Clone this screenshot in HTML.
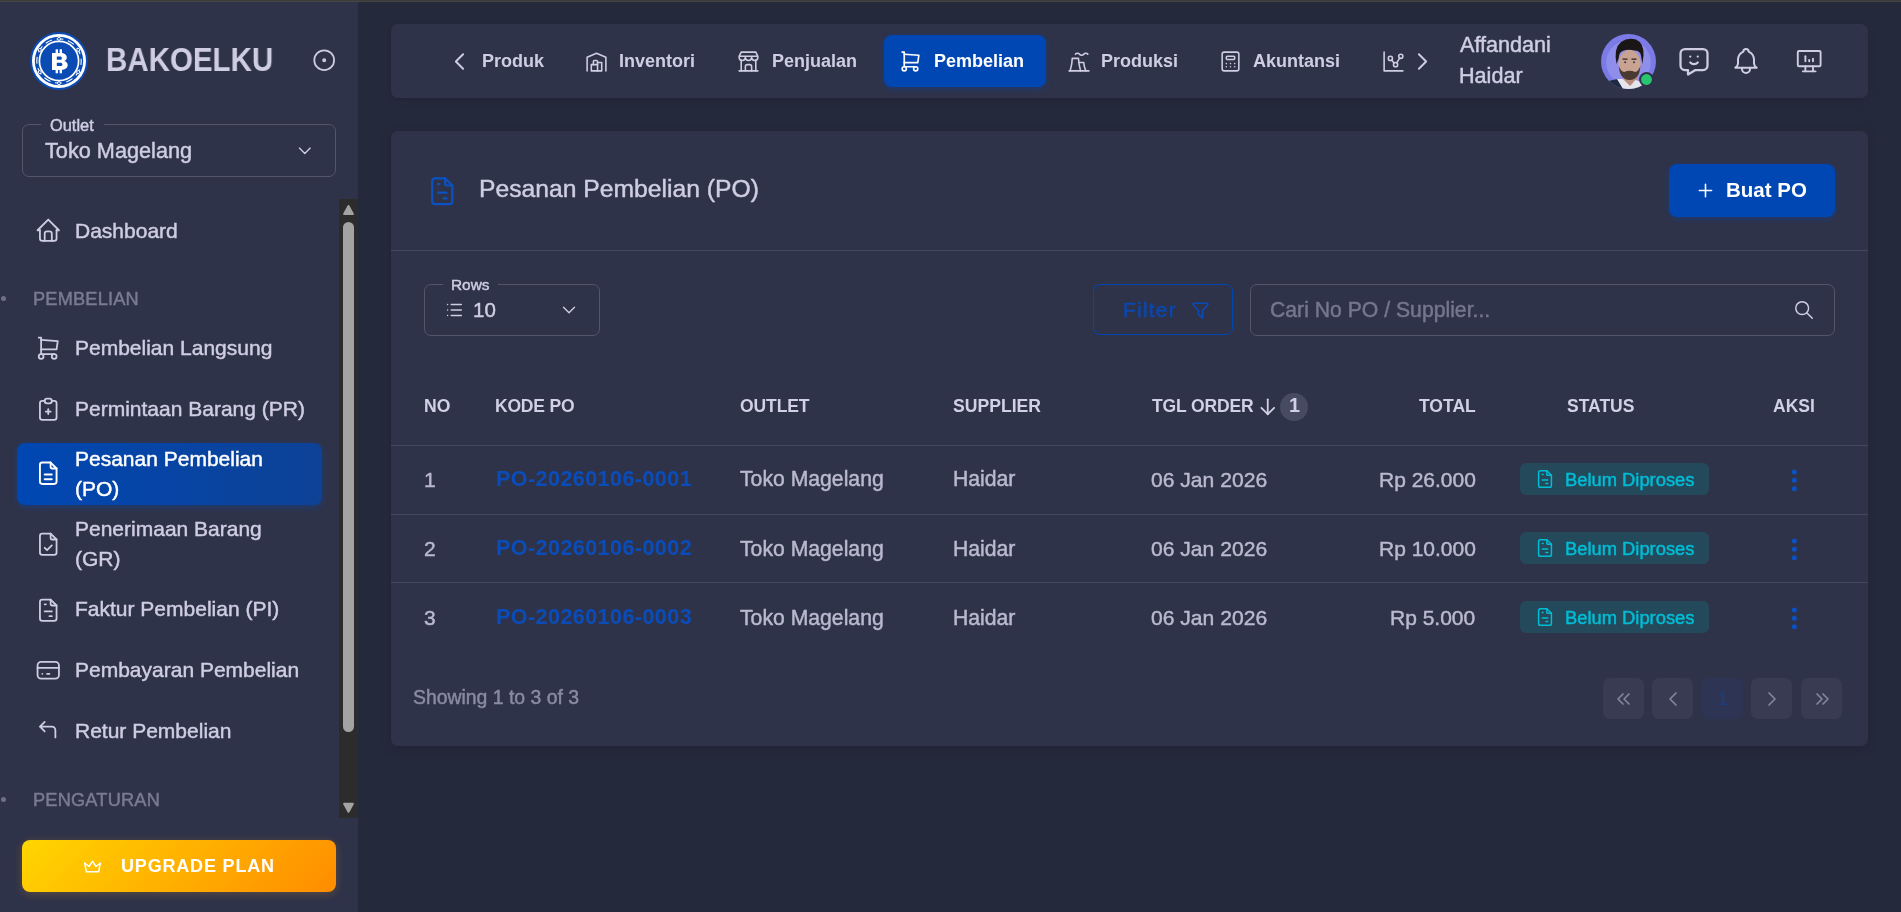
<!DOCTYPE html>
<html><head><meta charset="utf-8"><title>Pesanan Pembelian</title>
<style>
html,body{margin:0;padding:0;}
body{width:1901px;height:912px;overflow:hidden;background:#25293c;font-family:"Liberation Sans",sans-serif;position:relative;}
.t{position:absolute;white-space:nowrap;will-change:transform;}
.i{position:absolute;overflow:visible;}
.box{position:absolute;box-sizing:border-box;}
</style></head><body>
<div class="box" style="left:0;top:0;width:1901px;height:1px;background:#3c3c3c"></div><div class="box" style="left:0;top:1px;width:1901px;height:1px;background:#454644"></div>
<div class="box" style="left:0;top:2px;width:358px;height:910px;background:#2f3349"></div>
<svg class="i" style="left:29.5px;top:31.5px;width:58px;height:58px" viewBox="0 0 58 58">
<circle cx="29" cy="29" r="29" fill="#0b4cb4"/>
<circle cx="29" cy="29" r="25.6" fill="none" stroke="#fff" stroke-width="2.8"/>
<circle cx="29" cy="29" r="22.2" fill="none" stroke="#fff" stroke-width="1.1" stroke-dasharray="7 4.6" stroke-dashoffset="3"/>
<circle cx="29" cy="29" r="19.6" fill="none" stroke="#fff" stroke-width="1.7"/>
<circle cx="29" cy="6.8" r="1.5" fill="#0b4cb4" stroke="#fff" stroke-width="1"/>
<circle cx="29" cy="51.2" r="1.5" fill="#0b4cb4" stroke="#fff" stroke-width="1"/>
<circle cx="9.8" cy="17.9" r="1.5" fill="#0b4cb4" stroke="#fff" stroke-width="1"/>
<circle cx="48.2" cy="17.9" r="1.5" fill="#0b4cb4" stroke="#fff" stroke-width="1"/>
<circle cx="9.8" cy="40.1" r="1.5" fill="#0b4cb4" stroke="#fff" stroke-width="1"/>
<circle cx="48.2" cy="40.1" r="1.5" fill="#0b4cb4" stroke="#fff" stroke-width="1"/>
<path d="M22 21h8.6c4 0 6.2 1.9 6.2 4.4c0 1.8-1.1 3-2.6 3.5c2.2 .5 3.5 2 3.5 4.2c0 2.9-2.4 4.9-6.6 4.9h-9.1z M26.8 24.6v3.1h3.3c1.1 0 1.8-.6 1.8-1.55s-.7-1.55-1.8-1.55z M26.8 30.8v3.3h3.6c1.2 0 2-.6 2-1.65s-.8-1.65-2-1.65z" fill="#fff" fill-rule="evenodd"/>
<rect x="25.6" y="17.3" width="2.4" height="4.2" fill="#fff"/><rect x="29.6" y="17.3" width="2.4" height="4.2" fill="#fff"/>
<rect x="25.6" y="37.4" width="2.4" height="3.9" fill="#fff"/><rect x="29.6" y="37.4" width="2.4" height="3.9" fill="#fff"/>
</svg>
<div class="t " style="left:106.2px;top:44.39px;font-size:32.5px;line-height:32.5px;color:#cfcde4;font-weight:700;transform:scaleX(.908);transform-origin:0 0;">BAKOELKU</div>
<svg class="i" style="left:311.4px;top:47.1px;width:26.4px;height:26.4px;" viewBox="0 0 24 24" fill="none" stroke="#cfcde4" stroke-width="1.6" stroke-linecap="round" stroke-linejoin="round"><path d="M12 12m-1 0a1 1 0 1 0 2 0a1 1 0 1 0 -2 0"/><path d="M12 12m-9 0a9 9 0 1 0 18 0a9 9 0 1 0 -18 0"/></svg>
<div class="box" style="left:22px;top:124px;width:314px;height:53px;border:1px solid #545569;border-radius:7px"></div>
<div class="box" style="left:41px;top:120px;width:63px;height:8px;background:#2f3349"></div>
<div class="t " style="left:49.7px;top:116.62px;font-size:16.4px;line-height:16.4px;color:#cfcde4;-webkit-text-stroke-width:0.45px;">Outlet</div>
<div class="t " style="left:44.5px;top:139.93px;font-size:21.7px;line-height:21.7px;color:#cfcde4;-webkit-text-stroke-width:0.45px;">Toko Magelang</div>
<svg class="i" style="left:294.2px;top:140.2px;width:21.6px;height:21.6px;" viewBox="0 0 24 24" fill="none" stroke="#cfcde4" stroke-width="1.5" stroke-linecap="round" stroke-linejoin="round"><path d="M6 9l6 6l6 -6"/></svg>
<svg class="i" style="left:33.75px;top:215.95px;width:28.5px;height:28.5px;" viewBox="0 0 24 24" fill="none" stroke="#cfcde4" stroke-width="1.5" stroke-linecap="round" stroke-linejoin="round"><path d="M5 12l-2 0l9 -9l9 9l-2 0"/><path d="M5 12v7a2 2 0 0 0 2 2h10a2 2 0 0 0 2 -2v-7"/><path d="M9 21v-6a2 2 0 0 1 2 -2h2a2 2 0 0 1 2 2v6"/></svg>
<div class="t " style="left:75.2px;top:219.62px;font-size:21px;line-height:21px;color:#cfcde4;-webkit-text-stroke-width:0.45px;">Dashboard</div>
<svg class="i" style="left:33.75px;top:333.65px;width:28.5px;height:28.5px;" viewBox="0 0 24 24" fill="none" stroke="#cfcde4" stroke-width="1.5" stroke-linecap="round" stroke-linejoin="round"><path d="M6 19m-2 0a2 2 0 1 0 4 0a2 2 0 1 0 -4 0"/><path d="M17 19m-2 0a2 2 0 1 0 4 0a2 2 0 1 0 -4 0"/><path d="M17 17h-11v-14h-2"/><path d="M6 5l14 1l-1 7h-13"/></svg>
<div class="t " style="left:75.2px;top:337.22px;font-size:21px;line-height:21px;color:#cfcde4;-webkit-text-stroke-width:0.45px;">Pembelian Langsung</div>
<svg class="i" style="left:33.75px;top:394.75px;width:28.5px;height:28.5px;" viewBox="0 0 24 24" fill="none" stroke="#cfcde4" stroke-width="1.5" stroke-linecap="round" stroke-linejoin="round"><path d="M9 5h-2a2 2 0 0 0 -2 2v12a2 2 0 0 0 2 2h10a2 2 0 0 0 2 -2v-12a2 2 0 0 0 -2 -2h-2"/><path d="M9 3m0 2a2 2 0 0 1 2 -2h2a2 2 0 0 1 2 2v0a2 2 0 0 1 -2 2h-2a2 2 0 0 1 -2 -2z"/><path d="M10 14h4"/><path d="M12 12v4"/></svg>
<div class="t " style="left:75.2px;top:398.42px;font-size:21px;line-height:21px;color:#cfcde4;-webkit-text-stroke-width:0.45px;">Permintaan Barang (PR)</div>
<svg class="i" style="left:33.75px;top:595.75px;width:28.5px;height:28.5px;" viewBox="0 0 24 24" fill="none" stroke="#cfcde4" stroke-width="1.5" stroke-linecap="round" stroke-linejoin="round"><path d="M14 3v4a1 1 0 0 0 1 1h4"/><path d="M17 21h-10a2 2 0 0 1 -2 -2v-14a2 2 0 0 1 2 -2h7l5 5v11a2 2 0 0 1 -2 2z"/><path d="M9 7l1 0"/><path d="M9 13l6 0"/><path d="M13 17l2 0"/></svg>
<div class="t " style="left:75.2px;top:598.22px;font-size:21px;line-height:21px;color:#cfcde4;-webkit-text-stroke-width:0.45px;">Faktur Pembelian (PI)</div>
<svg class="i" style="left:33.75px;top:655.75px;width:28.5px;height:28.5px;" viewBox="0 0 24 24" fill="none" stroke="#cfcde4" stroke-width="1.5" stroke-linecap="round" stroke-linejoin="round"><path d="M3 5m0 3a3 3 0 0 1 3 -3h12a3 3 0 0 1 3 3v8a3 3 0 0 1 -3 3h-12a3 3 0 0 1 -3 -3z"/><path d="M3 10l18 0"/><path d="M7 15l.01 0"/><path d="M11 15l2 0"/></svg>
<div class="t " style="left:75.2px;top:659.22px;font-size:21px;line-height:21px;color:#cfcde4;-webkit-text-stroke-width:0.45px;">Pembayaran Pembelian</div>
<svg class="i" style="left:33.75px;top:716.15px;width:28.5px;height:28.5px;" viewBox="0 0 24 24" fill="none" stroke="#cfcde4" stroke-width="1.5" stroke-linecap="round" stroke-linejoin="round"><path d="M18 18v-6a3 3 0 0 0 -3 -3h-10l4 -4m0 8l-4 -4"/></svg>
<div class="t " style="left:75.2px;top:719.82px;font-size:21px;line-height:21px;color:#cfcde4;-webkit-text-stroke-width:0.45px;">Retur Pembelian</div>
<div class="t " style="left:33.4px;top:289.79px;font-size:18.2px;line-height:18.2px;color:#7a7b92;-webkit-text-stroke-width:0.45px;letter-spacing:0.2px;">PEMBELIAN</div>
<div class="box" style="left:1px;top:296px;width:5px;height:5px;border-radius:50%;background:#6f7088"></div>
<div class="t " style="left:33px;top:790.89px;font-size:18.2px;line-height:18.2px;color:#7a7b92;-webkit-text-stroke-width:0.45px;letter-spacing:0.2px;">PENGATURAN</div>
<div class="box" style="left:1px;top:797px;width:5px;height:5px;border-radius:50%;background:#6f7088"></div>
<div class="box" style="left:17px;top:443px;width:305px;height:62px;border-radius:8px;background:linear-gradient(270deg,rgba(0,71,179,.72) 0%,#0047b3 100%);box-shadow:0 2px 6px rgba(0,71,179,.45)"></div>
<svg class="i" style="left:33.95px;top:459.45px;width:28.5px;height:28.5px;" viewBox="0 0 24 24" fill="none" stroke="#fff" stroke-width="1.6" stroke-linecap="round" stroke-linejoin="round"><path d="M14 3v4a1 1 0 0 0 1 1h4"/><path d="M17 21h-10a2 2 0 0 1 -2 -2v-14a2 2 0 0 1 2 -2h7l5 5v11a2 2 0 0 1 -2 2z"/><path d="M9 17h6"/><path d="M9 13h6"/></svg>
<div class="t " style="left:75.2px;top:447.52px;font-size:21px;line-height:21px;color:#fff;-webkit-text-stroke-width:0.45px;">Pesanan Pembelian</div>
<div class="t " style="left:75.2px;top:477.52px;font-size:21px;line-height:21px;color:#fff;-webkit-text-stroke-width:0.45px;">(PO)</div>
<svg class="i" style="left:33.95px;top:529.75px;width:28.5px;height:28.5px;" viewBox="0 0 24 24" fill="none" stroke="#cfcde4" stroke-width="1.5" stroke-linecap="round" stroke-linejoin="round"><path d="M14 3v4a1 1 0 0 0 1 1h4"/><path d="M17 21h-10a2 2 0 0 1 -2 -2v-14a2 2 0 0 1 2 -2h7l5 5v11a2 2 0 0 1 -2 2z"/><path d="M9 15l2 2l4 -4"/></svg>
<div class="t " style="left:75.2px;top:518.22px;font-size:21px;line-height:21px;color:#cfcde4;-webkit-text-stroke-width:0.45px;">Penerimaan Barang</div>
<div class="t " style="left:75.2px;top:548.22px;font-size:21px;line-height:21px;color:#cfcde4;-webkit-text-stroke-width:0.45px;">(GR)</div>
<div class="box" style="left:339px;top:199px;width:19px;height:619px;background:#2c2c2c"></div>
<div class="box" style="left:343px;top:222px;width:11px;height:510px;border-radius:6px;background:#a3a3a3"></div>
<svg class="i" style="left:339px;top:199px;width:19px;height:19px" viewBox="0 0 19 19"><path d="M9.5 7L13.9 15H5.1Z" fill="#a3a3a3" stroke="#a3a3a3" stroke-width="2" stroke-linejoin="round"/></svg>
<svg class="i" style="left:339px;top:799px;width:19px;height:19px" viewBox="0 0 19 19"><path d="M9.5 12.8L13.9 4.8H5.1Z" fill="#a3a3a3" stroke="#a3a3a3" stroke-width="2" stroke-linejoin="round"/></svg>
<div class="box" style="left:22px;top:840px;width:314px;height:52px;border-radius:8px;background:linear-gradient(135deg,#ffd600 0%,#ff8c00 100%);box-shadow:0 2px 9px rgba(255,160,40,.22)"></div>
<svg class="i" style="left:81.5px;top:856px;width:21px;height:21px;" viewBox="0 0 24 24" fill="none" stroke="#fff" stroke-width="1.6" stroke-linecap="round" stroke-linejoin="round"><path d="M12 6l4 6l5 -4l-2 10h-14l-2 -10l5 4z"/></svg>
<div class="t " style="left:121px;top:857.26px;font-size:18px;line-height:18px;color:#fff;font-weight:700;letter-spacing:0.82px;">UPGRADE PLAN</div>
<div class="box" style="left:391px;top:24px;width:1477px;height:74px;border-radius:7px;background:#2f3349;box-shadow:0 2px 6px rgba(0,0,0,.12)"></div>
<svg class="i" style="left:445.0px;top:47.0px;width:29px;height:29px;" viewBox="0 0 24 24" fill="none" stroke="#cfcde4" stroke-width="1.6" stroke-linecap="round" stroke-linejoin="round"><path d="M15 6l-6 6l6 6"/></svg>
<div class="t " style="left:481.6px;top:52.16px;font-size:18px;line-height:18px;color:#cfcde4;font-weight:700;">Produk</div>
<svg class="i" style="left:584px;top:49px;width:25px;height:25px;" viewBox="0 0 24 24" fill="none" stroke="#cfcde4" stroke-width="1.5" stroke-linecap="round" stroke-linejoin="round"><path d="M3 21v-13l9 -4l9 4v13"/><path d="M13 13h4v8h-10v-6h6"/><path d="M13 21v-9a1 1 0 0 0 -1 -1h-2a1 1 0 0 0 -1 1v3"/></svg>
<div class="t " style="left:619px;top:52.16px;font-size:18px;line-height:18px;color:#cfcde4;font-weight:700;">Inventori</div>
<svg class="i" style="left:736px;top:49px;width:25px;height:25px;" viewBox="0 0 24 24" fill="none" stroke="#cfcde4" stroke-width="1.5" stroke-linecap="round" stroke-linejoin="round"><path d="M3 21l18 0"/><path d="M3 7v1a3 3 0 0 0 6 0v-1m0 1a3 3 0 0 0 6 0v-1m0 1a3 3 0 0 0 6 0v-1h-18l2 -4h14l2 4"/><path d="M5 21l0 -10.15"/><path d="M19 21l0 -10.15"/><path d="M9 21v-4a2 2 0 0 1 2 -2h2a2 2 0 0 1 2 2v4"/></svg>
<div class="t " style="left:771.5px;top:52.16px;font-size:18px;line-height:18px;color:#cfcde4;font-weight:700;">Penjualan</div>
<div class="box" style="left:884px;top:35px;width:162px;height:52px;border-radius:8px;background:#0047b3;box-shadow:0 2px 6px rgba(0,71,179,.4)"></div>
<svg class="i" style="left:897.5px;top:49px;width:25px;height:25px;" viewBox="0 0 24 24" fill="none" stroke="#fff" stroke-width="1.6" stroke-linecap="round" stroke-linejoin="round"><path d="M6 19m-2 0a2 2 0 1 0 4 0a2 2 0 1 0 -4 0"/><path d="M17 19m-2 0a2 2 0 1 0 4 0a2 2 0 1 0 -4 0"/><path d="M17 17h-11v-14h-2"/><path d="M6 5l14 1l-1 7h-13"/></svg>
<div class="t " style="left:933.8px;top:52.16px;font-size:18px;line-height:18px;color:#fff;font-weight:700;">Pembelian</div>
<svg class="i" style="left:1065.5px;top:48.5px;width:25px;height:25px;" viewBox="0 0 24 24" fill="none" stroke="#cfcde4" stroke-width="1.5" stroke-linecap="round" stroke-linejoin="round"><path d="M4 21c1.147 -4.02 1.983 -8.027 2 -12h6c.017 3.973 .853 7.98 2 12"/><path d="M12.5 13h4.5c.025 2.612 .894 5.296 2 8"/><path d="M9 5a2.4 2.4 0 0 1 2 -1a2.4 2.4 0 0 1 2 1a2.4 2.4 0 0 0 2 1a2.4 2.4 0 0 0 2 -1a2.4 2.4 0 0 1 2 -1a2.4 2.4 0 0 1 2 1"/><path d="M3 21l19 0"/></svg>
<div class="t " style="left:1100.5px;top:52.16px;font-size:18px;line-height:18px;color:#cfcde4;font-weight:700;">Produksi</div>
<svg class="i" style="left:1218px;top:49px;width:25px;height:25px;" viewBox="0 0 24 24" fill="none" stroke="#cfcde4" stroke-width="1.5" stroke-linecap="round" stroke-linejoin="round"><path d="M4 3m0 2a2 2 0 0 1 2 -2h12a2 2 0 0 1 2 2v14a2 2 0 0 1 -2 2h-12a2 2 0 0 1 -2 -2z"/><path d="M8 7m0 1a1 1 0 0 1 1 -1h6a1 1 0 0 1 1 1v1a1 1 0 0 1 -1 1h-6a1 1 0 0 1 -1 -1z"/><path d="M8 14l0 .01"/><path d="M12 14l0 .01"/><path d="M16 14l0 .01"/><path d="M8 17l0 .01"/><path d="M12 17l0 .01"/><path d="M16 17l0 .01"/></svg>
<div class="t " style="left:1253px;top:52.16px;font-size:18px;line-height:18px;color:#cfcde4;font-weight:700;">Akuntansi</div>
<svg class="i" style="left:1380.5px;top:48.8px;width:25px;height:25px;" viewBox="0 0 24 24" fill="none" stroke="#cfcde4" stroke-width="1.5" stroke-linecap="round" stroke-linejoin="round"><path d="M3 3v18h18"/><path d="M9 9m-2 0a2 2 0 1 0 4 0a2 2 0 1 0 -4 0"/><path d="M19 7m-2 0a2 2 0 1 0 4 0a2 2 0 1 0 -4 0"/><path d="M14 15m-2 0a2 2 0 1 0 4 0a2 2 0 1 0 -4 0"/><path d="M10.16 10.62l2.34 2.88"/><path d="M15.088 13.328l2.837 -4.586"/></svg>
<svg class="i" style="left:1407.7px;top:47.2px;width:29px;height:29px;" viewBox="0 0 24 24" fill="none" stroke="#cfcde4" stroke-width="1.6" stroke-linecap="round" stroke-linejoin="round"><path d="M9 6l6 6l-6 6"/></svg>
<div class="t " style="left:1459.7px;top:33.72px;font-size:21.6px;line-height:21.6px;color:#cfcde4;-webkit-text-stroke-width:0.45px;">Affandani</div>
<div class="t " style="left:1458.6px;top:64.92px;font-size:21.6px;line-height:21.6px;color:#cfcde4;-webkit-text-stroke-width:0.45px;">Haidar</div>
<svg class="i" style="left:1601px;top:34px;width:55px;height:55px" viewBox="0 0 55 55">
<defs><clipPath id="avc"><circle cx="27.5" cy="27.5" r="27.5"/></clipPath></defs>
<g clip-path="url(#avc)">
<rect width="55" height="55" fill="#7b7ae6"/>
<circle cx="27.5" cy="28.5" r="22.3" fill="#8f8eea"/>
<path d="M23 36 L35 36 L36 47 L22 47Z" fill="#b88d7e"/>
<path d="M0 55 L2 50 Q8 46 17 45 L23 55Z" fill="#1e2a44"/>
<path d="M16 45 L22 45 L29 48 L35 46 L42 49 L44 55 L22 55Z" fill="#e6e5ec"/>
<path d="M22 45 L35 45 L31 50 L29 52Z" fill="#b88d7e"/>
<ellipse cx="28.6" cy="30.5" rx="11" ry="14.8" fill="#c9a392"/>
<path d="M17.8 32 Q18.5 45.5 28.6 46 Q38.7 45.5 39.4 32 Q37.5 37.5 34 38 Q28.6 35.5 23.2 38 Q19.8 37.5 17.8 32Z" fill="#4a3931"/>
<path d="M15.5 30 Q12.5 14 20 8 Q27 3 35 5.5 Q43 9 42.5 21 L41.5 30 L40 22 Q39.5 16.5 33.5 16.5 Q27 15 21.5 17 Q18 18.5 17.8 24Z" fill="#1b1616"/>
<circle cx="24.2" cy="28.2" r="1" fill="#3a3a44"/><circle cx="33" cy="28.2" r="1" fill="#3a3a44"/>
<path d="M21.5 25.2h5 M30.5 25.2h5" stroke="#2b2222" stroke-width="1.2"/>
</g>
<circle cx="45.5" cy="45.5" r="7.4" fill="#2f3349"/>
<circle cx="45.5" cy="45.5" r="5.4" fill="#28c76f"/>
</svg>
<svg class="i" style="left:1675.5px;top:43px;width:36px;height:36px;" viewBox="0 0 24 24" fill="none" stroke="#cfcde4" stroke-width="1.5" stroke-linecap="round" stroke-linejoin="round"><path d="M18 4a3 3 0 0 1 3 3v8a3 3 0 0 1 -3 3h-5l-5 3v-3h-2a3 3 0 0 1 -3 -3v-8a3 3 0 0 1 3 -3h12z"/><path d="M9.5 9h.01"/><path d="M14.5 9h.01"/><path d="M9.5 13a3.5 3.5 0 0 0 5 0"/></svg>
<svg class="i" style="left:1729.5px;top:45px;width:32px;height:32px;" viewBox="0 0 24 24" fill="none" stroke="#cfcde4" stroke-width="1.5" stroke-linecap="round" stroke-linejoin="round"><path d="M10 5a2 2 0 1 1 4 0a7 7 0 0 1 4 6v3a4 4 0 0 0 2 3h-16a4 4 0 0 0 2 -3v-3a7 7 0 0 1 4 -6"/><path d="M9 17v1a3 3 0 0 0 6 0v-1"/></svg>
<svg class="i" style="left:1793.8px;top:45.6px;width:30.4px;height:30.4px;" viewBox="0 0 24 24" fill="none" stroke="#cfcde4" stroke-width="1.5" stroke-linecap="round" stroke-linejoin="round"><path d="M3 4m0 1a1 1 0 0 1 1 -1h16a1 1 0 0 1 1 1v10a1 1 0 0 1 -1 1h-16a1 1 0 0 1 -1 -1z"/><path d="M7 20h10"/><path d="M9 16v4"/><path d="M15 16v4"/><path d="M9 12v-4"/><path d="M12 12v-1"/><path d="M15 12v-2"/></svg>
<div class="box" style="left:391px;top:131px;width:1477px;height:615px;border-radius:7px;background:#2f3349;box-shadow:0 3px 12px rgba(0,0,0,.14)"></div>
<svg class="i" style="left:425.35px;top:173.95px;width:34.5px;height:34.5px;" viewBox="0 0 24 24" fill="none" stroke="#0a52c4" stroke-width="1.5" stroke-linecap="round" stroke-linejoin="round"><path d="M14 3v4a1 1 0 0 0 1 1h4"/><path d="M17 21h-10a2 2 0 0 1 -2 -2v-14a2 2 0 0 1 2 -2h7l5 5v11a2 2 0 0 1 -2 2z"/><path d="M9 7l1 0"/><path d="M9 13l6 0"/><path d="M13 17l2 0"/></svg>
<div class="t " style="left:478.6px;top:177.29px;font-size:24.7px;line-height:24.7px;color:#cfcde4;-webkit-text-stroke-width:0.45px;">Pesanan Pembelian (PO)</div>
<div class="box" style="left:1669px;top:164px;width:166px;height:53px;border-radius:8px;background:#0047b3;box-shadow:0 2px 6px rgba(0,71,179,.4)"></div>
<svg class="i" style="left:1694.5px;top:179.5px;width:21px;height:21px;" viewBox="0 0 24 24" fill="none" stroke="#fff" stroke-width="1.8" stroke-linecap="round" stroke-linejoin="round"><path d="M12 5l0 14"/><path d="M5 12l14 0"/></svg>
<div class="t " style="left:1725.8px;top:179.85px;font-size:20.5px;line-height:20.5px;color:#fff;font-weight:700;">Buat PO</div>
<div class="box" style="left:391px;top:250px;width:1477px;height:1px;background:#44485e"></div>
<div class="box" style="left:424px;top:284px;width:176px;height:52px;border:1px solid #545569;border-radius:7px"></div>
<div class="box" style="left:443px;top:280px;width:55px;height:8px;background:#2f3349"></div>
<div class="t " style="left:451.3px;top:276.96px;font-size:15.4px;line-height:15.4px;color:#cfcde4;-webkit-text-stroke-width:0.45px;">Rows</div>
<svg class="i" style="left:442.5px;top:298.5px;width:22px;height:22px;" viewBox="0 0 24 24" fill="none" stroke="#cfcde4" stroke-width="1.6" stroke-linecap="round" stroke-linejoin="round"><path d="M9 6l11 0"/><path d="M9 12l11 0"/><path d="M9 18l11 0"/><path d="M5 6l0 .01"/><path d="M5 12l0 .01"/><path d="M5 18l0 .01"/></svg>
<div class="t " style="left:473.4px;top:299.95px;font-size:20.5px;line-height:20.5px;color:#cfcde4;-webkit-text-stroke-width:0.45px;">10</div>
<svg class="i" style="left:558.0px;top:298.7px;width:22px;height:22px;" viewBox="0 0 24 24" fill="none" stroke="#cfcde4" stroke-width="1.5" stroke-linecap="round" stroke-linejoin="round"><path d="M6 9l6 6l6 -6"/></svg>
<div class="box" style="left:1093px;top:284px;width:140px;height:51px;border:1.5px solid #0047b3;border-radius:7px"></div>
<div class="t " style="left:1123.2px;top:299.22px;font-size:21px;line-height:21px;color:#0a48b0;-webkit-text-stroke-width:0.45px;letter-spacing:1.2px;">Filter</div>
<svg class="i" style="left:1187.5px;top:298px;width:25px;height:25px;" viewBox="0 0 24 24" fill="none" stroke="#0a4ab8" stroke-width="1.6" stroke-linecap="round" stroke-linejoin="round"><path d="M5.5 5h13a1 1 0 0 1 .5 1.5l-5 5.5l0 7l-4 -3l0 -4l-5 -5.5a1 1 0 0 1 .5 -1.5"/></svg>
<div class="box" style="left:1250px;top:284px;width:585px;height:52px;border:1px solid #545569;border-radius:7px"></div>
<div class="t " style="left:1269.5px;top:299.45px;font-size:21.2px;line-height:21.2px;color:#75768f;-webkit-text-stroke-width:0.45px;">Cari No PO / Supplier...</div>
<svg class="i" style="left:1793px;top:298.5px;width:22px;height:22px;" viewBox="0 0 24 24" fill="none" stroke="#cfcde4" stroke-width="1.6" stroke-linecap="round" stroke-linejoin="round"><path d="M10 10m-7 0a7 7 0 1 0 14 0a7 7 0 1 0 -14 0"/><path d="M21 21l-6 -6"/></svg>
<div class="t " style="left:423.7px;top:398.00px;font-size:17.6px;line-height:17.6px;color:#d2d0e7;font-weight:700;">NO</div>
<div class="t " style="left:495.1px;top:398.09px;font-size:17.5px;line-height:17.5px;color:#d2d0e7;font-weight:700;letter-spacing:-0.2px;">KODE PO</div>
<div class="t " style="left:740px;top:398.09px;font-size:17.5px;line-height:17.5px;color:#d2d0e7;font-weight:700;letter-spacing:-0.1px;">OUTLET</div>
<div class="t " style="left:953.3px;top:398.00px;font-size:17.6px;line-height:17.6px;color:#d2d0e7;font-weight:700;">SUPPLIER</div>
<div class="t " style="left:1151.7px;top:398.09px;font-size:17.5px;line-height:17.5px;color:#d2d0e7;font-weight:700;letter-spacing:-0.15px;">TGL ORDER</div>
<svg class="i" style="left:1254.75px;top:393.85px;width:25.5px;height:25.5px;" viewBox="0 0 24 24" fill="none" stroke="#d2d0e7" stroke-width="1.7" stroke-linecap="round" stroke-linejoin="round"><path d="M12 5l0 14"/><path d="M18 13l-6 6"/><path d="M6 13l6 6"/></svg>
<div class="box" style="left:1280.3px;top:392.6px;width:27.6px;height:28px;border-radius:50%;background:#464a62"></div>
<div class="t " style="left:1288.6px;top:396.14px;font-size:19.8px;line-height:19.8px;color:#d2d0e7;font-weight:700;">1</div>
<div class="t " style="right:425.5999999999999px;top:398.09px;font-size:17.5px;line-height:17.5px;color:#d2d0e7;font-weight:700;">TOTAL</div>
<div class="t " style="left:1566.9px;top:398.09px;font-size:17.5px;line-height:17.5px;color:#d2d0e7;font-weight:700;">STATUS</div>
<div class="t " style="left:1772.8px;top:398.09px;font-size:17.5px;line-height:17.5px;color:#d2d0e7;font-weight:700;">AKSI</div>
<div class="box" style="left:391px;top:445px;width:1477px;height:1px;background:#44485e"></div>
<div class="t " style="left:423.6px;top:468.62px;font-size:21px;line-height:21px;color:#bab9d0;-webkit-text-stroke-width:0.45px;">1</div>
<div class="t " style="left:496px;top:468.70px;font-size:21.5px;line-height:21.5px;color:#0a4dba;font-weight:700;letter-spacing:0.45px;">PO-20260106-0001</div>
<div class="t " style="left:740.3px;top:468.45px;font-size:21.2px;line-height:21.2px;color:#bab9d0;-webkit-text-stroke-width:0.45px;">Toko Magelang</div>
<div class="t " style="left:952.6px;top:468.45px;font-size:21.2px;line-height:21.2px;color:#bab9d0;-webkit-text-stroke-width:0.45px;">Haidar</div>
<div class="t " style="left:1151.3px;top:468.54px;font-size:21.1px;line-height:21.1px;color:#bab9d0;-webkit-text-stroke-width:0.45px;">06 Jan 2026</div>
<div class="t " style="right:425.5px;top:468.62px;font-size:21px;line-height:21px;color:#bab9d0;-webkit-text-stroke-width:0.45px;">Rp 26.000</div>
<div class="box" style="left:1520px;top:463.0px;width:189px;height:32px;border-radius:6px;background:#24495b"></div>
<svg class="i" style="left:1533.5px;top:468.0px;width:22px;height:22px;" viewBox="0 0 24 24" fill="none" stroke="#00bdd6" stroke-width="1.6" stroke-linecap="round" stroke-linejoin="round"><path d="M14 3v4a1 1 0 0 0 1 1h4"/><path d="M17 21h-10a2 2 0 0 1 -2 -2v-14a2 2 0 0 1 2 -2h7l5 5v11a2 2 0 0 1 -2 2z"/><path d="M9 7l1 0"/><path d="M9 13l6 0"/><path d="M13 17l2 0"/></svg>
<div class="t " style="left:1564.7px;top:470.87px;font-size:18.35px;line-height:18.35px;color:#00bdd6;-webkit-text-stroke-width:0.45px;">Belum Diproses</div>
<svg class="i" style="left:1779.55px;top:466.05px;width:28.7px;height:28.7px;" viewBox="0 0 24 24" fill="none" stroke="#0a52c4" stroke-width="2.2" stroke-linecap="round" stroke-linejoin="round"><path d="M12 12m-1 0a1 1 0 1 0 2 0a1 1 0 1 0 -2 0"/><path d="M12 19m-1 0a1 1 0 1 0 2 0a1 1 0 1 0 -2 0"/><path d="M12 5m-1 0a1 1 0 1 0 2 0a1 1 0 1 0 -2 0"/></svg>
<div class="box" style="left:391px;top:514px;width:1477px;height:1px;background:#44485e"></div>
<div class="t " style="left:423.6px;top:537.72px;font-size:21px;line-height:21px;color:#bab9d0;-webkit-text-stroke-width:0.45px;">2</div>
<div class="t " style="left:496px;top:537.80px;font-size:21.5px;line-height:21.5px;color:#0a4dba;font-weight:700;letter-spacing:0.45px;">PO-20260106-0002</div>
<div class="t " style="left:740.3px;top:537.55px;font-size:21.2px;line-height:21.2px;color:#bab9d0;-webkit-text-stroke-width:0.45px;">Toko Magelang</div>
<div class="t " style="left:952.6px;top:537.55px;font-size:21.2px;line-height:21.2px;color:#bab9d0;-webkit-text-stroke-width:0.45px;">Haidar</div>
<div class="t " style="left:1151.3px;top:537.64px;font-size:21.1px;line-height:21.1px;color:#bab9d0;-webkit-text-stroke-width:0.45px;">06 Jan 2026</div>
<div class="t " style="right:425.5px;top:537.72px;font-size:21px;line-height:21px;color:#bab9d0;-webkit-text-stroke-width:0.45px;">Rp 10.000</div>
<div class="box" style="left:1520px;top:532.1px;width:189px;height:32px;border-radius:6px;background:#24495b"></div>
<svg class="i" style="left:1533.5px;top:537.1px;width:22px;height:22px;" viewBox="0 0 24 24" fill="none" stroke="#00bdd6" stroke-width="1.6" stroke-linecap="round" stroke-linejoin="round"><path d="M14 3v4a1 1 0 0 0 1 1h4"/><path d="M17 21h-10a2 2 0 0 1 -2 -2v-14a2 2 0 0 1 2 -2h7l5 5v11a2 2 0 0 1 -2 2z"/><path d="M9 7l1 0"/><path d="M9 13l6 0"/><path d="M13 17l2 0"/></svg>
<div class="t " style="left:1564.7px;top:539.97px;font-size:18.35px;line-height:18.35px;color:#00bdd6;-webkit-text-stroke-width:0.45px;">Belum Diproses</div>
<svg class="i" style="left:1779.55px;top:535.15px;width:28.7px;height:28.7px;" viewBox="0 0 24 24" fill="none" stroke="#0a52c4" stroke-width="2.2" stroke-linecap="round" stroke-linejoin="round"><path d="M12 12m-1 0a1 1 0 1 0 2 0a1 1 0 1 0 -2 0"/><path d="M12 19m-1 0a1 1 0 1 0 2 0a1 1 0 1 0 -2 0"/><path d="M12 5m-1 0a1 1 0 1 0 2 0a1 1 0 1 0 -2 0"/></svg>
<div class="box" style="left:391px;top:582px;width:1477px;height:1px;background:#44485e"></div>
<div class="t " style="left:423.6px;top:606.82px;font-size:21px;line-height:21px;color:#bab9d0;-webkit-text-stroke-width:0.45px;">3</div>
<div class="t " style="left:496px;top:606.90px;font-size:21.5px;line-height:21.5px;color:#0a4dba;font-weight:700;letter-spacing:0.45px;">PO-20260106-0003</div>
<div class="t " style="left:740.3px;top:606.65px;font-size:21.2px;line-height:21.2px;color:#bab9d0;-webkit-text-stroke-width:0.45px;">Toko Magelang</div>
<div class="t " style="left:952.6px;top:606.65px;font-size:21.2px;line-height:21.2px;color:#bab9d0;-webkit-text-stroke-width:0.45px;">Haidar</div>
<div class="t " style="left:1151.3px;top:606.74px;font-size:21.1px;line-height:21.1px;color:#bab9d0;-webkit-text-stroke-width:0.45px;">06 Jan 2026</div>
<div class="t " style="right:425.5px;top:606.82px;font-size:21px;line-height:21px;color:#bab9d0;-webkit-text-stroke-width:0.45px;">Rp 5.000</div>
<div class="box" style="left:1520px;top:601.2px;width:189px;height:32px;border-radius:6px;background:#24495b"></div>
<svg class="i" style="left:1533.5px;top:606.2px;width:22px;height:22px;" viewBox="0 0 24 24" fill="none" stroke="#00bdd6" stroke-width="1.6" stroke-linecap="round" stroke-linejoin="round"><path d="M14 3v4a1 1 0 0 0 1 1h4"/><path d="M17 21h-10a2 2 0 0 1 -2 -2v-14a2 2 0 0 1 2 -2h7l5 5v11a2 2 0 0 1 -2 2z"/><path d="M9 7l1 0"/><path d="M9 13l6 0"/><path d="M13 17l2 0"/></svg>
<div class="t " style="left:1564.7px;top:609.07px;font-size:18.35px;line-height:18.35px;color:#00bdd6;-webkit-text-stroke-width:0.45px;">Belum Diproses</div>
<svg class="i" style="left:1779.55px;top:604.25px;width:28.7px;height:28.7px;" viewBox="0 0 24 24" fill="none" stroke="#0a52c4" stroke-width="2.2" stroke-linecap="round" stroke-linejoin="round"><path d="M12 12m-1 0a1 1 0 1 0 2 0a1 1 0 1 0 -2 0"/><path d="M12 19m-1 0a1 1 0 1 0 2 0a1 1 0 1 0 -2 0"/><path d="M12 5m-1 0a1 1 0 1 0 2 0a1 1 0 1 0 -2 0"/></svg>
<div class="t " style="left:412.9px;top:687.78px;font-size:19.4px;line-height:19.4px;color:#8a8ba2;-webkit-text-stroke-width:0.45px;">Showing 1 to 3 of 3</div>
<div class="box" style="left:1603px;top:678px;width:41px;height:41px;border-radius:7px;background:#383b51"></div>
<svg class="i" style="left:1611.5px;top:686.5px;width:24px;height:24px;" viewBox="0 0 24 24" fill="none" stroke="#83859d" stroke-width="1.7" stroke-linecap="round" stroke-linejoin="round"><path d="M11 7l-5 5l5 5"/><path d="M17 7l-5 5l5 5"/></svg>
<div class="box" style="left:1652px;top:678px;width:41px;height:41px;border-radius:7px;background:#383b51"></div>
<svg class="i" style="left:1660.5px;top:686.5px;width:24px;height:24px;" viewBox="0 0 24 24" fill="none" stroke="#83859d" stroke-width="1.7" stroke-linecap="round" stroke-linejoin="round"><path d="M15 6l-6 6l6 6"/></svg>
<div class="box" style="left:1702.4px;top:678px;width:41px;height:41px;border-radius:7px;background:#2e3453"></div>
<div class="t " style="left:1717.9px;top:690.26px;font-size:18px;line-height:18px;color:#1b3f7e;-webkit-text-stroke-width:0px;">1</div>
<div class="box" style="left:1751px;top:678px;width:41px;height:41px;border-radius:7px;background:#383b51"></div>
<svg class="i" style="left:1759.5px;top:686.5px;width:24px;height:24px;" viewBox="0 0 24 24" fill="none" stroke="#83859d" stroke-width="1.7" stroke-linecap="round" stroke-linejoin="round"><path d="M9 6l6 6l-6 6"/></svg>
<div class="box" style="left:1801.3px;top:678px;width:41px;height:41px;border-radius:7px;background:#383b51"></div>
<svg class="i" style="left:1809.8px;top:686.5px;width:24px;height:24px;" viewBox="0 0 24 24" fill="none" stroke="#83859d" stroke-width="1.7" stroke-linecap="round" stroke-linejoin="round"><path d="M7 7l5 5l-5 5"/><path d="M13 7l5 5l-5 5"/></svg>
</body></html>
